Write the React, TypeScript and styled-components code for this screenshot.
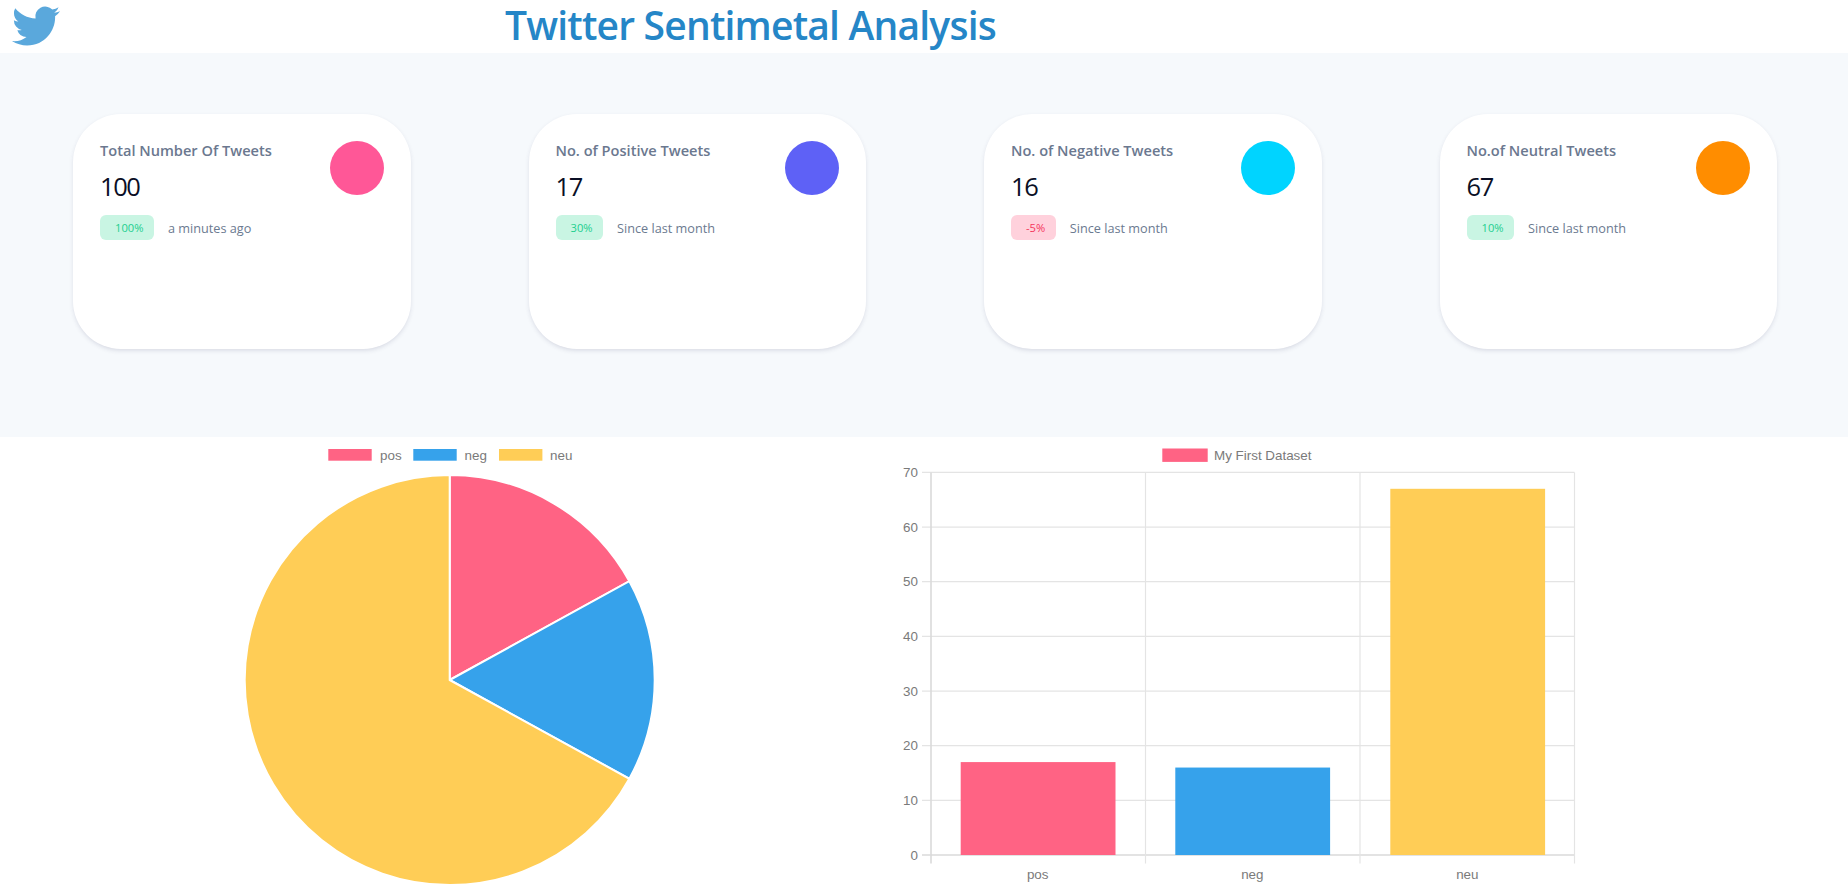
import React from "react";
import styled, { createGlobalStyle } from "styled-components";

interface Stat {
  title: string;
  value: string;
  delta: string;
  note: string;
  circle: string;
  negative?: boolean;
}

const stats: Stat[] = [
  { title: "Total Number Of Tweets", value: "100", delta: "100%", note: "a minutes ago", circle: "#ff5797" },
  { title: "No. of Positive Tweets", value: "17", delta: "30%", note: "Since last month", circle: "#5e61f6" },
  { title: "No. of Negative Tweets", value: "16", delta: "-5%", note: "Since last month", circle: "#00d4ff", negative: true },
  { title: "No.of Neutral Tweets", value: "67", delta: "10%", note: "Since last month", circle: "#ff8d00" },
];

const PINK = "#ff6384";
const BLUE = "#36a2eb";
const YELLOW = "#ffcd56";

const pieData = [
  { label: "pos", value: 17, color: PINK },
  { label: "neg", value: 16, color: BLUE },
  { label: "neu", value: 67, color: YELLOW },
];

const PieChart: React.FC = () => {
  const cx = 449.7;
  const cy = 243;
  const r = 205;
  let start = -Math.PI / 2;
  const slices = pieData.map((d) => {
    const end = start + (d.value / 100) * Math.PI * 2;
    const large = end - start > Math.PI ? 1 : 0;
    const path = `M${cx} ${cy} L${cx + r * Math.cos(start)} ${cy + r * Math.sin(start)} A${r} ${r} 0 ${large} 1 ${cx + r * Math.cos(end)} ${cy + r * Math.sin(end)} Z`;
    start = end;
    return { ...d, path };
  });
  const legend = [
    { x: 328.3, tx: 380 },
    { x: 413.3, tx: 464.5 },
    { x: 499, tx: 550 },
  ];
  return (
    <PieSvg viewBox="0 0 900 448">
      {slices.map((s, i) => (
        <g key={s.label}>
          <rect x={legend[i].x} y={12} width={43.4} height={11.7} fill={s.color} />
          <ChartText x={legend[i].tx} y={22.5}>{s.label}</ChartText>
        </g>
      ))}
      {slices.map((s) => (
        <path key={s.label} d={s.path} fill={s.color} stroke="#fff" strokeWidth={2} />
      ))}
    </PieSvg>
  );
};

const BarChart: React.FC = () => {
  const left = 31;
  const right = 674.5;
  const top = 35.4;
  const bottom = 418;
  const unit = (bottom - top) / 70;
  const cols = [0, 1, 2, 3].map((i) => left + (i * (right - left)) / 3);
  const ticks = [0, 10, 20, 30, 40, 50, 60, 70];
  const bars = [
    { label: "pos", value: 17, color: PINK, x: 60.7 },
    { label: "neg", value: 16, color: BLUE, x: 275.3 },
    { label: "neu", value: 67, color: YELLOW, x: 490.3 },
  ];
  return (
    <BarSvg viewBox="0 0 700 448">
      <rect x={262.3} y={11.5} width={45.4} height={13.4} fill={PINK} />
      <ChartText x={314} y={22.5}>My First Dataset</ChartText>
      {ticks.map((t) => {
        const y = bottom - t * unit;
        return (
          <g key={t}>
            <GridLine x1={left - 9} x2={right} y1={y} y2={y} $strong={t === 0} />
            <ChartText x={left - 13} y={y + 4.5} textAnchor="end">{t}</ChartText>
          </g>
        );
      })}
      {cols.map((x, i) => (
        <GridLine key={x} x1={x} x2={x} y1={top} y2={bottom + 8.5} $strong={i === 0} />
      ))}
      {bars.map((b) => (
        <g key={b.label}>
          <rect x={b.x} y={bottom - b.value * unit} width={154.8} height={b.value * unit} fill={b.color} />
          <ChartText x={b.x + 77} y={442} textAnchor="middle">{b.label}</ChartText>
        </g>
      ))}
    </BarSvg>
  );
};

const App: React.FC = () => (
  <>
    <GlobalStyle />
    <Header>
      <Bird viewBox="0 0 24 24" aria-hidden="true">
        <path d="M23.953 4.57a10 10 0 01-2.825.775 4.958 4.958 0 002.163-2.723c-.951.555-2.005.959-3.127 1.184a4.92 4.92 0 00-8.384 4.482C7.69 8.095 4.067 6.13 1.64 3.162a4.822 4.822 0 00-.666 2.475c0 1.71.87 3.213 2.188 4.096a4.904 4.904 0 01-2.228-.616v.06a4.923 4.923 0 003.946 4.827 4.996 4.996 0 01-2.212.085 4.936 4.936 0 004.604 3.417 9.867 9.867 0 01-6.102 2.105c-.39 0-.779-.023-1.17-.067a13.995 13.995 0 007.557 2.209c9.053 0 13.998-7.496 13.998-13.985 0-.21 0-.42-.015-.63A9.935 9.935 0 0024 4.59z" />
      </Bird>
      <Title>Twitter Sentimetal Analysis</Title>
    </Header>
    <StatsBand>
      {stats.map((s) => (
        <Card key={s.title}>
          <CardTop>
            <div>
              <CardTitle>{s.title}</CardTitle>
              <CardValue>{s.value}</CardValue>
            </div>
            <Circle $color={s.circle} />
          </CardTop>
          <CardFoot>
            <Badge $negative={s.negative}>{s.delta}</Badge>
            <Note>{s.note}</Note>
          </CardFoot>
        </Card>
      ))}
    </StatsBand>
    <ChartRow>
      <PieChart />
      <BarChart />
    </ChartRow>
  </>
);

const GlobalStyle = createGlobalStyle`
  html, body {
    margin: 0;
    padding: 0;
    background: #fff;
    overflow: hidden;
    font-family: "Open Sans", "Noto Sans", sans-serif;
  }
`;

const Header = styled.header`
  height: 53px;
  display: flex;
  align-items: flex-start;
  background: #fff;
`;

const Bird = styled.svg`
  width: 48px;
  height: 48px;
  margin: 2px 0 0 12px;
  fill: #5aa8dc;
  flex: none;
`;

const Title = styled.h1`
  margin: 0 0 0 445px;
  font-size: 39px;
  font-weight: 600;
  letter-spacing: -0.8px;
  line-height: 50px;
  color: #2586c7;
  white-space: nowrap;
`;

const StatsBand = styled.section`
  height: 384px;
  box-sizing: border-box;
  padding: 61px 71px 0 73px;
  background: #f6f9fc;
  display: flex;
  justify-content: space-between;
  align-items: flex-start;
`;

const Card = styled.article`
  width: 337.5px;
  height: 235px;
  box-sizing: border-box;
  padding: 26px 27px 0 27px;
  background: #fff;
  border-radius: 48px;
  box-shadow: 0 2px 5px -1px rgba(50, 50, 93, 0.18);
`;

const CardTop = styled.div`
  display: flex;
  justify-content: space-between;
  align-items: flex-start;
`;

const CardTitle = styled.div`
  font-size: 14.6px;
  font-weight: 600;
  line-height: 20px;
  color: #6b788f;
  white-space: nowrap;
`;

const CardValue = styled.div`
  font-size: 25.5px;
  letter-spacing: -1.4px;
  line-height: 30px;
  margin-top: 11px;
  color: #0a0f25;
`;

const Circle = styled.div<{ $color: string }>`
  width: 54px;
  height: 54px;
  margin-top: 1px;
  border-radius: 50%;
  background: ${({ $color }) => $color};
  flex: none;
`;

const CardFoot = styled.div`
  display: flex;
  align-items: center;
  margin-top: 14px;
`;

const Badge = styled.span<{ $negative?: boolean }>`
  height: 25px;
  box-sizing: border-box;
  padding: 0 10.5px 0 15px;
  display: inline-flex;
  align-items: center;
  border-radius: 6px;
  font-size: 11.2px;
  background: ${({ $negative }) => ($negative ? "#ffd1dc" : "#c9f5e3")};
  color: ${({ $negative }) => ($negative ? "#f5365c" : "#1ecf8f")};
`;

const Note = styled.span`
  margin-left: 14px;
  font-size: 12.7px;
  color: #6b7a90;
  white-space: nowrap;
`;

const ChartRow = styled.section`
  display: flex;
  align-items: flex-start;
  height: 448px;
`;

const PieSvg = styled.svg`
  width: 900px;
  height: 448px;
  flex: none;
  display: block;
`;

const BarSvg = styled.svg`
  width: 700px;
  height: 448px;
  flex: none;
  display: block;
`;

const ChartText = styled.text`
  font-family: "Liberation Sans", Arial, sans-serif;
  font-size: 13.4px;
  fill: #7a7a7a;
`;

const GridLine = styled.line<{ $strong?: boolean }>`
  stroke: ${({ $strong }) => ($strong ? "#dadada" : "#e4e4e4")};
  stroke-width: ${({ $strong }) => ($strong ? 1.6 : 1.2)};
`;

export default App;
